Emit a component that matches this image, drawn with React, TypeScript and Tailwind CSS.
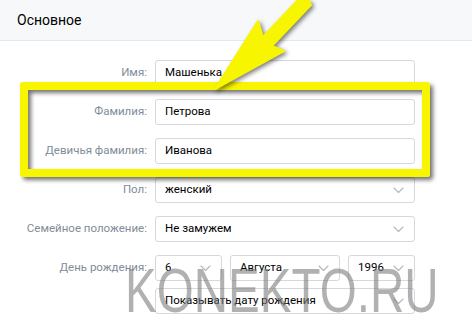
import React from "react";

const Chevron = () => (
  <svg width="11" height="7" viewBox="0 0 11 7" fill="none" className="shrink-0">
    <path d="M1 1l4.5 4.5L10 1" stroke="#aeb7c2" strokeWidth="1.1" strokeLinecap="round" strokeLinejoin="round" />
  </svg>
);

const Field = ({ value, select, w = "w-[260px]" }: { value: string; select?: boolean; w?: string }) => (
  <div
    className={`${w} h-[26px] border border-[#d3d9de] rounded-[3px] bg-white flex items-center justify-between pl-[9px] pr-[10px] text-[11.5px] text-black`}
  >
    <span className="truncate">{value}</span>
    {select && <Chevron />}
  </div>
);

const Row = ({ label, children }: { label: string; children: React.ReactNode }) => (
  <div className="flex items-center gap-[8px]">
    <div className="w-[147px] text-right text-[11.5px] text-[#818c99]">{label}</div>
    {children}
  </div>
);

export default function App() {
  return (
    <div
      className="relative w-[472px] h-[320px] overflow-hidden bg-white"
      style={{ fontFamily: "Roboto, 'Liberation Sans', sans-serif" }}
    >
      <div className="h-[41px] bg-[#f7f8fa] border-b border-[#e7e8ec] flex items-center pl-[17px] text-[14px] text-black">
        Основное
      </div>
      <div className="pt-[19px] flex flex-col gap-[13px]">
        <Row label="Имя:">
          <Field value="Машенька" />
        </Row>
        <Row label="Фамилия:">
          <Field value="Петрова" />
        </Row>
        <Row label="Девичья фамилия:">
          <Field value="Иванова" />
        </Row>
        <Row label="Пол:">
          <Field value="женский" select />
        </Row>
        <Row label="Семейное положение:">
          <Field value="Не замужем" select />
        </Row>
        <div className="flex flex-col gap-[7px]">
          <Row label="День рождения:">
            <div className="flex gap-[8px]">
              <Field value="6" select w="w-[67px]" />
              <Field value="Августа" select w="w-[110px]" />
              <Field value="1996" select w="w-[67px]" />
            </div>
          </Row>
          <Row label="">
            <Field value="Показывать дату рождения" select />
          </Row>
        </div>
      </div>

      {/* yellow highlight frame */}
      <div className="absolute left-[20px] top-[82px] w-[410px] h-[95px] border-[8px] border-[#f8f500] rounded-[3px] shadow-[3px_3px_4px_rgba(0,0,0,0.55),inset_3px_3px_4px_rgba(0,0,0,0.55)]" />

      {/* arrow */}
      <svg
        className="absolute left-0 top-0"
        width="472"
        height="110"
        viewBox="0 0 472 110"
        style={{ filter: "drop-shadow(2px 2px 2px rgba(0,0,0,0.5))" }}
      >
        <polygon
          points="215,89 258,21 263,37 298,0 303,-2 309,0 311,5 272,46 284,51"
          fill="#f8f500"
          stroke="#f8f500"
          strokeWidth="2"
          strokeLinejoin="round"
        />
      </svg>

      {/* watermark */}
      <div
        className="absolute left-[125px] top-[259px] text-[63px] leading-none whitespace-nowrap text-[rgba(125,125,125,0.6)] origin-left scale-x-[0.755]"
        style={{ fontFamily: "'Liberation Sans', Arial, sans-serif" }}
      >
        KONEKTO.RU
      </div>
    </div>
  );
}
